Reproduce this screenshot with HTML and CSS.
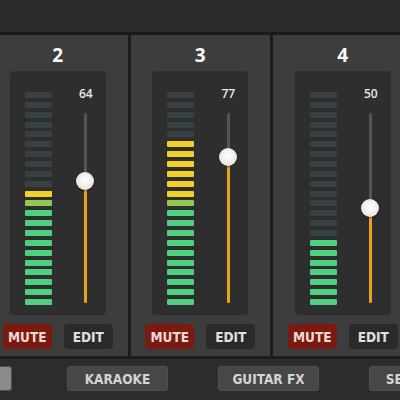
FILE: index.html
```html
<!DOCTYPE html>
<html lang="en">
<head>
    <meta charset="UTF-8">
    <meta name="viewport" content="width=device-width, initial-scale=1.0">
    <title>Mixer</title>
    <link rel="stylesheet" href="styles.css">
</head>
<body>
    <div class="topbar"></div>

    <div class="mixer" id="mixer"></div>

    <div class="bottombar">
        <button class="tab active"></button>
        <button class="tab">KARAOKE</button>
        <button class="tab">GUITAR FX</button>
        <button class="tab">SETTINGS</button>
    </div>

    <script>
        // channel data: lit = number of lit meter segments, vol = fader value
        const channels = [
            { num: 2, lit: 12, vol: 64 },
            { num: 3, lit: 17, vol: 77 },
            { num: 4, lit: 7, vol: 50 }
        ];
        const SEGMENTS = 22;

        function segColor(i) {
            if (i < 10) return 'green';
            if (i === 10) return 'lime';
            return 'yellow';
        }

        const mixer = document.getElementById('mixer');
        channels.forEach(ch => {
            let bars = '';
            for (let i = SEGMENTS - 1; i >= 0; i--) {
                const cls = i < ch.lit ? segColor(i) : 'off';
                bars += `<div class="seg ${cls}"></div>`;
            }
            mixer.innerHTML += `
                <div class="strip">
                    <div class="ch-num">${ch.num}</div>
                    <div class="panel">
                        <div class="meter">${bars}</div>
                        <div class="fader">
                            <div class="value">${ch.vol}</div>
                            <div class="track">
                                <div class="fill" style="height: ${ch.vol}%"></div>
                                <div class="knob" style="top: ${100 - ch.vol}%"></div>
                            </div>
                        </div>
                    </div>
                    <div class="buttons">
                        <button class="btn mute">MUTE</button>
                        <button class="btn edit">EDIT</button>
                    </div>
                </div>`;
        });
    </script>
</body>
</html>
```

FILE: styles.css
```css
body {
    margin: 0;
    width: 400px;
    height: 400px;
    overflow: hidden;
    background: #2c2c2c;
    font-family: "Open Sans", sans-serif;
}
.topbar {
    height: 32px;
    background: #2b2b2b;
    border-bottom: 3px solid #1b1b1b;
}
.mixer {
    display: flex;
    gap: 3px;
    margin-left: -12px;
    height: 321px;
    background: #1c1c1c;
}
.strip {
    flex: none;
    width: 139.5px;
    background: #3d3d3d;
    display: flex;
    flex-direction: column;
    align-items: center;
}
.ch-num {
    margin-top: 8px;
    height: 24px;
    line-height: 24px;
    color: #fafafa;
    font-size: 19px;
    font-weight: bold;
}
.panel {
    margin-top: 4px;
    width: 96px;
    height: 244px;
    box-sizing: border-box;
    background: #2e2e2e;
    border-radius: 4px;
    display: flex;
    padding: 21px 0 0 15px;
}
.meter {
    width: 27px;
    display: flex;
    flex-direction: column;
    gap: 3.86px;
}
.seg {
    height: 6px;
    border-radius: 1px;
}
.seg.off { background: #384244; }
.seg.green { background: #4fcf80; }
.seg.lime { background: #93c853; }
.seg.yellow { background: #f3cf2c; }

.fader {
    margin-left: 22px;
    width: 24px;
    display: flex;
    flex-direction: column;
    align-items: center;
}
.value {
    margin-top: -6px;
    height: 16px;
    line-height: 16px;
    color: #e8e8e8;
    font-size: 12px;
    font-weight: 600;
}
.track {
    position: relative;
    margin-top: 11px;
    width: 3px;
    height: 190px;
    background: #555;
    border-radius: 2px;
}
.fill {
    position: absolute;
    left: 0;
    bottom: 0;
    width: 3px;
    background: #eaa21c;
    border-radius: 2px;
}
.knob {
    position: absolute;
    left: -8px;
    width: 18px;
    height: 18px;
    margin-top: -9px;
    border-radius: 50%;
    background: radial-gradient(circle at 50% 45%, #ffffff 0%, #f0f0f0 45%, #cfcfcf 100%);
    box-shadow: 0 1px 2px rgba(0, 0, 0, 0.5);
}
.buttons {
    margin-top: 9px;
    display: flex;
    gap: 12px;
}
.btn, .tab {
    font-family: "DejaVu Sans Condensed", "DejaVu Sans", sans-serif;
    font-stretch: condensed;
    font-weight: bold;
    font-size: 13.5px;
    border: none;
    border-radius: 4px;
    padding: 0;
}
.btn {
    width: 49px;
    height: 25px;
}
.mute {
    background: #7b1a10;
    color: #ecd9d4;
}
.edit {
    background: #2a2a2a;
    color: #e0e0e0;
}
.bottombar {
    border-top: 3px solid #1c1c1c;
    padding-top: 7px;
    display: flex;
    gap: 50px;
    margin-left: -89px;
}
.tab {
    flex: none;
    width: 101px;
    height: 25px;
    background: #474747;
    color: #d4d4d4;
    box-shadow: inset 0 0 0 1px #505050;
}
.tab.active {
    background: #8c8c8c;
    margin-right: 5px;
}
```
